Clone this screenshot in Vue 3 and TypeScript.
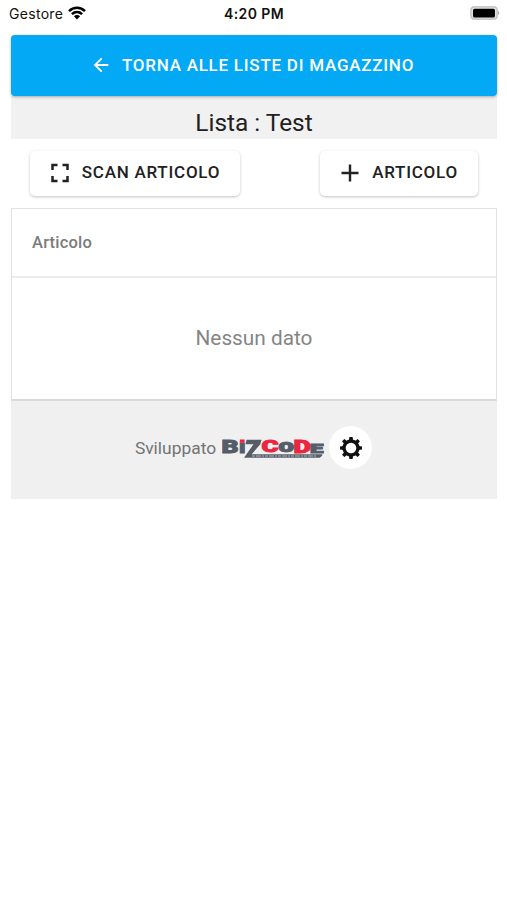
<script setup lang="ts">
interface LogoLetter {
  char: string
  x: number
  y: number
  width: number
  size: number
  tone: string
}

const statusTime = '4:20 PM'
const listName = 'Test'
const columns: string[] = ['Articolo']

const logoLetters: LogoLetter[] = [
  { char: 'B', x: -0.5, y: 16.5, width: 17, size: 17.5, tone: 'grey' },
  { char: 'ı', x: 17, y: 16.5, width: 6.5, size: 17.5, tone: 'grey' },
  { char: 'C', x: 39.5, y: 16.3, width: 17, size: 17.2, tone: 'red' },
  { char: 'o', x: 56.5, y: 16.3, width: 15.5, size: 18, tone: 'grey' },
  { char: 'D', x: 71.5, y: 16.5, width: 17.5, size: 17.5, tone: 'red' },
  { char: 'E', x: 88, y: 16.5, width: 13.5, size: 13, tone: 'grey' },
]
</script>

<template>
  <div class="screen">
    <header class="status">
      <div class="carrier">
        <span>Gestore</span>
        <svg class="wifi" width="18" height="14" viewBox="0 0 18 14">
          <path d="M1 5.200C5.600.700 12.400.700 17 5.200M3.900 8.200c3-2.800 7.200-2.800 10.200 0" fill="none" stroke="#000" stroke-width="2.500" />
          <path d="M5.900 10.300c1.900-1.700 4.300-1.700 6.200 0L9 13.400z" fill="#000" />
        </svg>
      </div>
      <strong class="time">{{ statusTime }}</strong>
      <svg class="battery" width="31" height="14" viewBox="0 0 31 14">
        <rect x=".9" y=".8" width="26.200" height="12.400" rx="3.400" fill="#e4e4e4" stroke="#bdbdbd" stroke-width="1.300" />
        <rect x="3" y="2.700" width="22" height="8.800" rx="1.600" fill="#000" />
        <path d="M28 4.800q2.600 2.200 0 4.400z" fill="#b0b0b0" />
      </svg>
    </header>

    <main class="content">
      <button class="back" type="button">
        <svg width="22" height="22" viewBox="0 0 24 24">
          <path d="M20 11v2H8l5.500 5.500-1.420 1.420L4.160 12l7.920-7.920L13.500 5.500 8 11z" fill="currentColor" />
        </svg>
        <span>Torna alle liste di magazzino</span>
      </button>

      <h1 class="title">Lista : {{ listName }}</h1>

      <div class="actions">
        <button class="action scan" type="button">
          <svg width="24" height="24" viewBox="0 0 24 24">
            <path d="M4.500 9v-5h5M14.500 4h5v5M19.500 15v5h-5M9.500 20h-5v-5" fill="none" stroke="currentColor" stroke-width="2.500" />
          </svg>
          <span>Scan articolo</span>
        </button>
        <button class="action add" type="button">
          <svg width="24" height="24" viewBox="0 0 24 24">
            <path d="M12 3.500v17M3.500 12h17" stroke="currentColor" stroke-width="2.400" />
          </svg>
          <span>Articolo</span>
        </button>
      </div>

      <section class="table">
        <div class="table-head">
          <span v-for="column in columns" :key="column">{{ column }}</span>
        </div>
        <div class="table-empty">Nessun dato</div>
      </section>

      <footer class="footer">
        <span class="credit">Sviluppato</span>
        <svg class="logo" width="102" height="24" viewBox="0 0 102 24">
          <text
            v-for="letter in logoLetters"
            :key="letter.char"
            :class="letter.tone"
            :x="letter.x"
            :y="letter.y"
            :textLength="letter.width"
            :font-size="letter.size"
            lengthAdjust="spacingAndGlyphs"
          >{{ letter.char }}</text>
          <rect class="red" x="17.800" y="3.500" width="4.800" height="3.200" />
          <path class="grey" d="M24.500 3.700h15l-1.200 4.500-8.600 10h70.500v1.500l-2.500 2H22l9.500-13.500h-8z" />
          <path d="M30 20h64" stroke="#b4b6bb" stroke-width="1.200" stroke-dasharray="3 1 5 1 2 1" />
        </svg>
        <button class="settings" type="button" aria-label="Impostazioni">
          <svg width="24" height="24" viewBox="0 0 24 24">
            <circle cx="12" cy="12" r="7" fill="none" stroke="currentColor" stroke-width="3.300" />
            <path
              v-for="angle in [0, 45, 90, 135, 180, 225, 270, 315]"
              :key="angle"
              d="M9.900 4.700l.5-3.700h3.200l.5 3.700z"
              :transform="`rotate(${angle} 12 12)`"
              fill="currentColor"
            />
          </svg>
        </button>
      </footer>
    </main>
  </div>
</template>

<style>
body {
  background: #fff;
}
</style>

<style scoped>
.screen {
  width: 507px;
  height: 900px;
  overflow: hidden;
  background: #fff;
  color: #212121;
  font-family: Roboto, sans-serif;
}
.status {
  display: grid;
  grid-template-columns: 1fr auto 1fr;
  align-items: center;
  height: 27px;
  padding: 0 6px 0 9px;
  box-sizing: border-box;
  color: #111;
  font-family: Inter, sans-serif;
  font-size: 14px;
}
.carrier {
  display: flex;
  align-items: center;
  gap: 5px;
  letter-spacing: 0.3px;
}
.wifi {
  margin-top: -2px;
}
.time {
  margin-right: 2px;
  font-size: 14px;
  font-weight: 600;
  letter-spacing: 0.4px;
}
.battery {
  justify-self: end;
  margin-top: -1px;
}
.content {
  margin: 8px 10px 0 11px;
}
button {
  display: flex;
  align-items: center;
  justify-content: center;
  border: 0;
  font-family: inherit;
  font-weight: 500;
  text-transform: uppercase;
}
.back {
  position: relative;
  width: 100%;
  height: 61px;
  gap: 10px;
  padding: 0 4px 1px 0;
  border-radius: 4px;
  background: #03a9f4;
  color: #fff;
  font-size: 17px;
  letter-spacing: 0.75px;
  box-shadow: 0 1px 3px rgba(0, 0, 0, 0.3);
}
.title {
  height: 43px;
  margin: 0;
  padding-top: 10px;
  box-sizing: border-box;
  background: #f1f1f1;
  font-size: 24.4px;
  font-weight: 400;
  line-height: 34px;
  text-align: center;
}
.actions {
  display: flex;
  justify-content: space-between;
  padding: 12px 19px;
}
.action {
  height: 45px;
  gap: 10px;
  padding: 0 2px 3px 0;
  border-radius: 5px;
  background: #fff;
  color: #212121;
  font-size: 17px;
  letter-spacing: 0.75px;
  box-shadow: 0 1px 3px rgba(0, 0, 0, 0.24);
}
.action svg {
  margin-top: 1px;
}
.scan {
  width: 210px;
}
.add {
  width: 158px;
}
.table {
  height: 193px;
  box-sizing: border-box;
  border: 1px solid #e2e2e2;
  border-bottom: 2px solid #dadada;
}
.table-head {
  display: flex;
  align-items: center;
  height: 69px;
  padding: 0 0 1px 20px;
  box-sizing: border-box;
  border-bottom: 2px solid #ececec;
  color: #7b7b7b;
  font-size: 16.5px;
  font-weight: 500;
  letter-spacing: 0.2px;
}
.table-empty {
  display: flex;
  align-items: center;
  justify-content: center;
  height: 120px;
  color: #858585;
  font-size: 20.8px;
}
.footer {
  display: flex;
  align-items: center;
  justify-content: center;
  height: 98px;
  padding: 0 1px 5px 0;
  box-sizing: border-box;
  background: #f0f0f1;
}
.credit {
  color: #737373;
  font-size: 17.4px;
}
.logo {
  margin-left: 6px;
  font-family: Roboto, sans-serif;
  font-weight: 900;
}
.grey {
  fill: #565d68;
}
.red {
  fill: #ec2540;
}
text.grey {
  stroke: #565d68;
  stroke-width: 1px;
}
text.red {
  stroke: #ec2540;
  stroke-width: 1px;
}
.settings {
  width: 43px;
  height: 43px;
  margin-left: 5px;
  padding: 0;
  border-radius: 50%;
  background: #fff;
  color: #111;
}
</style>
